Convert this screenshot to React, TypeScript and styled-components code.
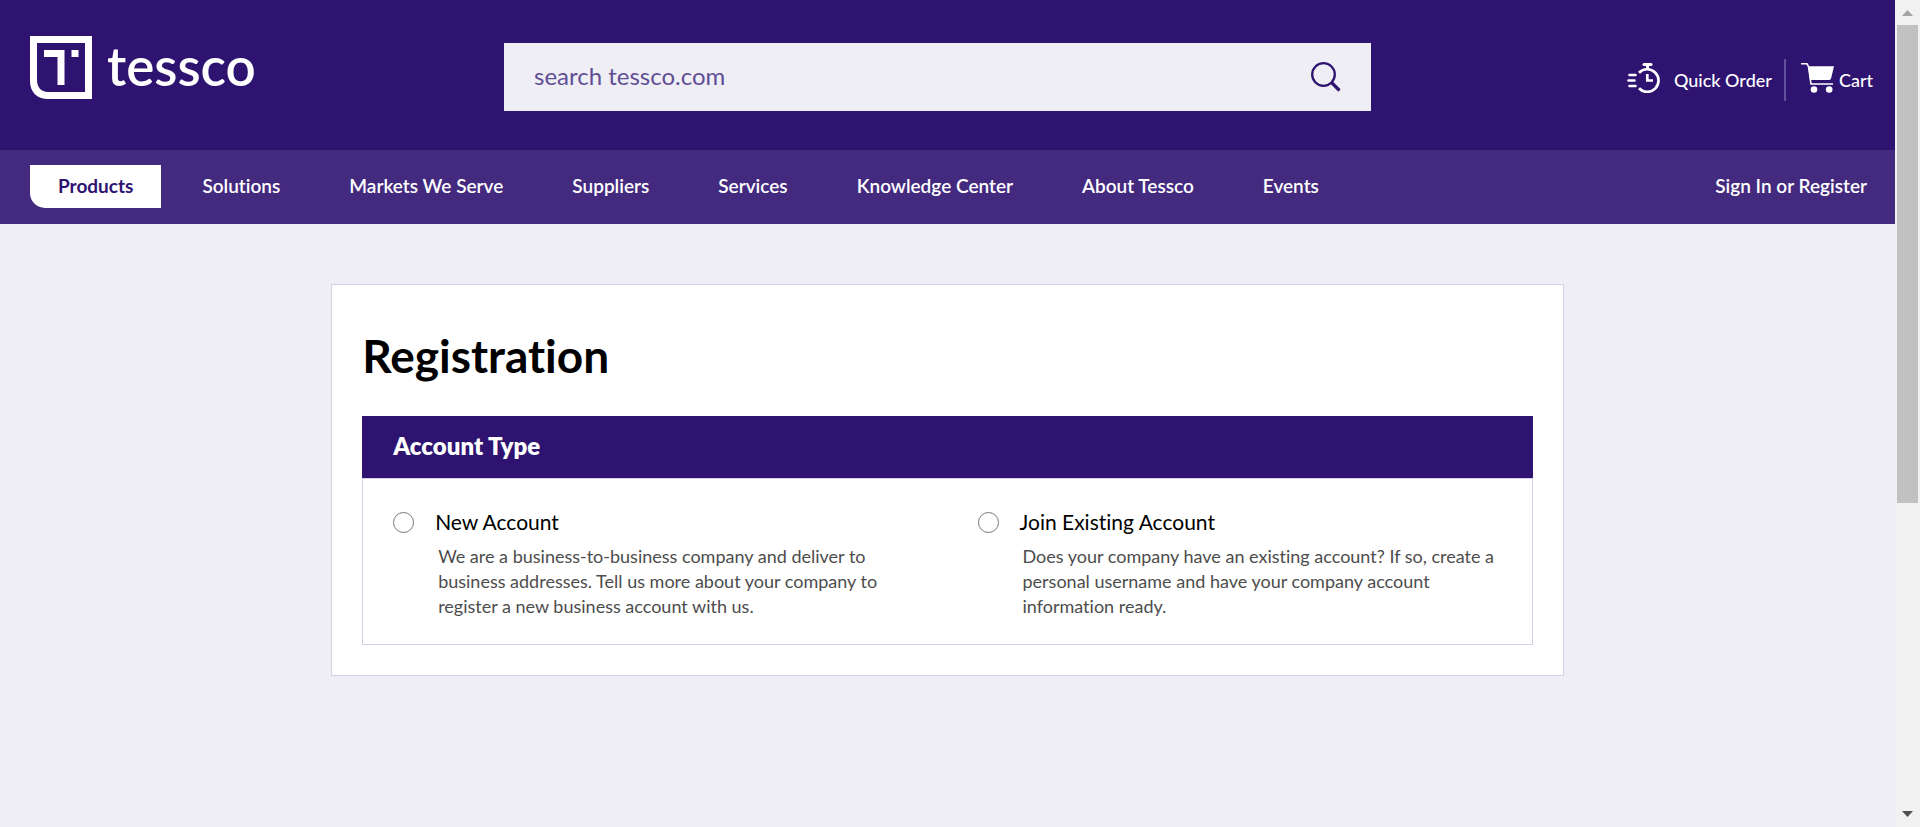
import React from 'react';
import styled, { createGlobalStyle } from 'styled-components';

const color = {
  brand: '#2e1371',
  nav: '#432a7f',
  surface: '#efeef4',
  border: '#d3d0e4',
  placeholder: '#614e97',
  divider: '#62509a',
  body: '#4d4d4d',
};

const GlobalStyle = createGlobalStyle`
  *, *::before, *::after { box-sizing: border-box; }
  body {
    margin: 0;
    background: ${color.surface};
    color: #000;
    font-family: Lato, "Liberation Sans", sans-serif;
    font-variant-ligatures: none;
  }
  a { color: inherit; text-decoration: none; }
`;

const Shell = styled.div`
  display: flex;
  min-height: 100vh;
`;

const Page = styled.div`
  flex: 1;
  min-width: 0;
`;

const Header = styled.header`
  display: grid;
  grid-template-columns: 474fr 867fr 502fr;
  align-items: start;
  height: 150px;
  padding: 0 22px 0 30px;
  background: ${color.brand};
  color: #fff;
`;

const Logo = styled.a`
  display: flex;
  align-items: flex-start;
  gap: 15px;
  margin-top: 36px;
  justify-self: start;
  svg { display: block; }
`;

const Wordmark = styled.span`
  font-size: 53px;
  font-weight: 600;
  line-height: 60px;
`;

const SearchForm = styled.form`
  display: flex;
  align-items: center;
  height: 68px;
  margin-top: 43px;
  padding: 0 30px;
  background: ${color.surface};
`;

const SearchInput = styled.input`
  flex: 1;
  min-width: 0;
  padding: 0 0 2px;
  border: 0;
  outline: 0;
  background: transparent;
  color: ${color.brand};
  font: 400 24px/30px Lato, "Liberation Sans", sans-serif;
  &::placeholder { color: ${color.placeholder}; opacity: 1; }
`;

const SearchButton = styled.button`
  padding: 0;
  border: 0;
  background: transparent;
  cursor: pointer;
  svg { display: block; }
`;

const Tools = styled.nav`
  display: flex;
  align-items: center;
  justify-content: flex-end;
  height: 42px;
  margin-top: 59px;
`;

const ToolLink = styled.a<{ $gap: number }>`
  display: flex;
  align-items: center;
  gap: ${(p) => p.$gap}px;
  padding-bottom: 4px;
  font-size: 18px;
  font-weight: 500;
  line-height: 24px;
  white-space: nowrap;
  span { padding-top: 4px; }
  svg { display: block; }
`;

const Divider = styled.span`
  width: 2px;
  height: 42px;
  margin: 0 15px 0 12px;
  background: ${color.divider};
`;

const NavBar = styled.nav`
  display: flex;
  align-items: center;
  justify-content: space-between;
  height: 74px;
  padding: 0 0 2px 30px;
  background: ${color.nav};
  color: #fff;
`;

const NavList = styled.ul`
  display: flex;
  gap: 13px;
  margin: 0;
  padding: 0;
  list-style: none;
`;

const NavLink = styled.a<{ $active?: boolean }>`
  display: block;
  padding: 0 28px 2px;
  border-radius: 0 0 0 15px;
  background: ${(p) => (p.$active ? '#fff' : 'transparent')};
  color: ${(p) => (p.$active ? color.brand : '#fff')};
  font-size: 19px;
  font-weight: ${(p) => (p.$active ? 700 : 600)};
  line-height: 41px;
  white-space: nowrap;
`;

const Card = styled.main`
  width: calc(65% + 1px);
  margin: 60px auto;
  padding: 30px;
  border: 1px solid ${color.border};
  background: #fff;
`;

const Title = styled.h1`
  margin: 14px 0 33px;
  font-size: 46px;
  font-weight: 700;
  line-height: 54px;
`;

const SectionTitle = styled.h2`
  margin: 0;
  padding: 0 31px 2px;
  background: ${color.brand};
  color: #fff;
  font-size: 24px;
  font-weight: 800;
  line-height: 60px;
`;

const Options = styled.div`
  display: grid;
  grid-template-columns: 1fr 1fr;
  border: 1px solid ${color.border};
`;

const Option = styled.div`
  display: grid;
  grid-template-columns: 21px 1fr;
  column-gap: 21px;
  align-items: center;
  padding: 29px 30px 25px;
`;

const Radio = styled.input`
  appearance: none;
  width: 21px;
  height: 21px;
  margin: 0;
  border: 1px solid #767676;
  border-radius: 50%;
  background: #fff;
  &:checked { border: 6px solid ${color.brand}; }
`;

const OptionLabel = styled.label`
  font-size: 21px;
  line-height: 28px;
`;

const Description = styled.p`
  grid-column: 2;
  margin: 8px 0 0 3px;
  color: ${color.body};
  font-size: 18px;
  line-height: 25px;
`;

const Scrollbar = styled.div`
  position: sticky;
  top: 0;
  display: flex;
  flex: 0 0 25px;
  flex-direction: column;
  height: 100vh;
  padding: 0 2px;
  background: #f1f1f1;
  svg { display: block; flex: none; }
`;

const Track = styled.div`
  flex: 1;
`;

const Thumb = styled.div`
  height: 61.5%;
  background: #c1c1c1;
`;

const LogoMark = () => (
  <svg width="62" height="63" viewBox="0 0 62 63" fill="#fff" aria-hidden="true">
    <path
      fillRule="evenodd"
      d="M0 0H62V63H18C7 63 0 56 0 45ZM7 7V44C7 51 11 56 18 56H55V7Z"
    />
    <path d="M14 14H34.500V49H27.500V21H14ZM41.500 14H48.500V21H41.500Z" />
  </svg>
);

const SearchIcon = () => (
  <svg width="30" height="30" viewBox="0 0 30 30" fill="none" stroke={color.brand} aria-hidden="true">
    <circle cx="12.500" cy="12.500" r="11.300" strokeWidth="2.300" />
    <path d="M20.500 20.500L28.500 28.500" strokeWidth="3.200" />
  </svg>
);

const QuickOrderIcon = () => (
  <svg width="33" height="30" viewBox="0 0 33 30" fill="none" stroke="#fff" aria-hidden="true">
    <path d="M17 1.500H24" strokeWidth="3" strokeLinecap="round" />
    <path d="M20.500 2V7" strokeWidth="3" />
    <path d="M12 9.800A11.300 11.300 0 1 1 12 25.300" strokeWidth="2.700" />
    <path d="M20.300 11V17.500H26" strokeWidth="2.700" />
    <path d="M2.500 12H8.500M1.500 17.500H7.500M2.500 23H8.500" strokeWidth="2.600" strokeLinecap="round" />
  </svg>
);

const CartIcon = () => (
  <svg width="33" height="30" viewBox="0 0 33 30" fill="#fff" aria-hidden="true">
    <path d="M0 .8H6L7.500 3.500L10 21H32" fill="none" stroke="#fff" strokeWidth="1.600" />
    <path d="M7 3.200H33L30.200 15C29.800 16.400 29 17 27.500 17H9Z" />
    <circle cx="13" cy="26.500" r="3.300" />
    <circle cx="28.200" cy="26.500" r="3.300" />
  </svg>
);

const Arrow = ({ down }: { down?: boolean }) => (
  <svg width="21" height="25" viewBox="0 0 21 25" aria-hidden="true">
    {down ? (
      <path d="M5 9H16L10.500 15Z" fill="#505050" />
    ) : (
      <path d="M5 16H16L10.500 10Z" fill="#a3a3a3" />
    )}
  </svg>
);

const links = [
  'Products',
  'Solutions',
  'Markets We Serve',
  'Suppliers',
  'Services',
  'Knowledge Center',
  'About Tessco',
  'Events',
];

const accountTypes = [
  {
    id: 'new-account',
    label: 'New Account',
    text: 'We are a business-to-business company and deliver to business addresses. Tell us more about your company to register a new business account with us.',
  },
  {
    id: 'existing-account',
    label: 'Join Existing Account',
    text: 'Does your company have an existing account? If so, create a personal username and have your company account information ready.',
  },
];

export default function App() {
  return (
    <Shell>
      <GlobalStyle />
      <Page>
        <Header>
          <Logo href="#">
            <LogoMark />
            <Wordmark>tessco</Wordmark>
          </Logo>
          <SearchForm role="search" onSubmit={(e) => e.preventDefault()}>
            <SearchInput type="text" aria-label="Search tessco.com" placeholder="search tessco.com" />
            <SearchButton type="submit" aria-label="Search">
              <SearchIcon />
            </SearchButton>
          </SearchForm>
          <Tools aria-label="Order tools">
            <ToolLink href="#" $gap={14}>
              <QuickOrderIcon />
              <span>Quick Order</span>
            </ToolLink>
            <Divider />
            <ToolLink href="#" $gap={5}>
              <CartIcon />
              <span>Cart</span>
            </ToolLink>
          </Tools>
        </Header>
        <NavBar aria-label="Main">
          <NavList>
            {links.map((name, i) => (
              <li key={name}>
                <NavLink href="#" $active={i === 0}>
                  {name}
                </NavLink>
              </li>
            ))}
          </NavList>
          <NavLink href="#">Sign In or Register</NavLink>
        </NavBar>
        <Card>
          <Title>Registration</Title>
          <SectionTitle id="account-type">Account Type</SectionTitle>
          <Options role="radiogroup" aria-labelledby="account-type">
            {accountTypes.map((type) => (
              <Option key={type.id}>
                <Radio type="radio" name="accountType" id={type.id} aria-describedby={`${type.id}-text`} />
                <OptionLabel htmlFor={type.id}>{type.label}</OptionLabel>
                <Description id={`${type.id}-text`}>{type.text}</Description>
              </Option>
            ))}
          </Options>
        </Card>
      </Page>
      <Scrollbar aria-hidden="true">
        <Arrow />
        <Track>
          <Thumb />
        </Track>
        <Arrow down />
      </Scrollbar>
    </Shell>
  );
}
